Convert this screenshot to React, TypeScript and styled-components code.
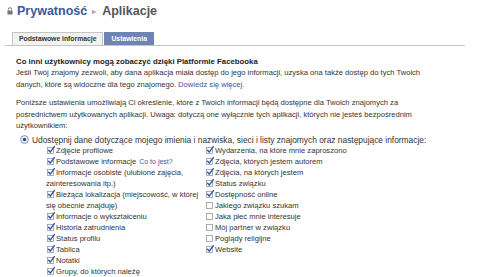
import React from 'react';
import styled, { createGlobalStyle } from 'styled-components';

const GlobalStyle = createGlobalStyle`
  html, body {
    margin: 0;
    padding: 0;
    background: #fff;
  }
  body {
    font-family: "Liberation Sans", Arial, sans-serif;
    color: #333;
  }
`;

const Page = styled.div`
  width: 496px;
  height: 277px;
  overflow: hidden;
`;

const Header = styled.div`
  display: flex;
  align-items: center;
  height: 18px;
  padding: 2px 0 0 7px;
  font-size: 12.5px;
  font-weight: bold;
`;

const Crumb = styled.span<{ $current?: boolean }>`
  color: ${(p) => (p.$current ? '#555' : '#3b5998')};
`;

const Arrow = styled.span`
  color: #aaa;
  font-size: 8px;
  margin: 0 6px 0 5px;
`;

const Tabs = styled.div`
  display: flex;
  margin: 12px 0 0 5px;
  padding-left: 7px;
  width: 453px;
  border-bottom: 1px solid #c4c4c4;
`;

const Tab = styled.div<{ $active?: boolean }>`
  height: 12px;
  line-height: 12px;
  padding: 0 6px;
  margin-right: 1px;
  font-size: 6.8px;
  font-weight: bold;
  color: ${(p) => (p.$active ? '#fff' : '#333')};
  background: ${(p) => (p.$active ? '#6d84b4' : '#f2f2f2')};
  border: 1px solid ${(p) => (p.$active ? '#6d84b4' : '#c4c4c4')};
  border-bottom: none;
`;

const Content = styled.div`
  padding: 10px 0 0 16px;
  font-size: 7.6px;
  line-height: 11.5px;
`;

const Title = styled.div`
  font-size: 7.8px;
  line-height: 11px;
  font-weight: bold;
  color: #222;
`;

const Para = styled.p`
  margin: 0 0 7px;
  white-space: nowrap;
`;

const Link = styled.a`
  color: #3b5998;
  text-decoration: none;
`;

const SmallLink = styled(Link)`
  font-size: 7px;
  margin-left: 3px;
`;

const RadioRow = styled.div`
  display: flex;
  align-items: center;
  margin-top: -4px;
  padding-left: 4px;
  font-size: 8.4px;
  line-height: 10px;
  white-space: nowrap;
`;

const RadioIcon = styled.span`
  display: inline-flex;
  margin-right: 3px;
`;

const Columns = styled.div`
  display: grid;
  grid-template-columns: 159px 200px;
  padding-left: 30px;
`;

const Column = styled.div`
  display: flex;
  flex-direction: column;
`;

const Item = styled.div`
  line-height: 11px;
`;

const Box = styled.span`
  display: inline-block;
  width: 8px;
  height: 8px;
  margin: 0 1px 0 1px;
  vertical-align: -1px;
`;

const Check = ({ on }: { on: boolean }) => (
  <Box>
    <svg width="8" height="8" viewBox="0 0 8 8">
      <rect x="0.5" y="1.5" width="6" height="6" fill="#fff" stroke={on ? '#8a9bbd' : '#999'} strokeWidth="0.8" />
      {on && <path d="M1.6 4.3 L3.2 6.1 L7.4 0.6" fill="none" stroke="#3b5998" strokeWidth="1.5" strokeLinecap="round" strokeLinejoin="round" />}
    </svg>
  </Box>
);

const left: [string, boolean, boolean?][] = [
  ['Zdjęcie profilowe', true],
  ['Podstawowe informacje', true, true],
  ['Informacje osobiste (ulubione zajęcia, zainteresowania itp.)', true],
  ['Bieżąca lokalizacja (miejscowość, w której się obecnie znajduję)', true],
  ['Informacje o wykształceniu', true],
  ['Historia zatrudnienia', true],
  ['Status profilu', true],
  ['Tablica', true],
  ['Notatki', true],
  ['Grupy, do których należę', true],
];

const right: [string, boolean][] = [
  ['Wydarzenia, na które mnie zaproszono', true],
  ['Zdjęcia, których jestem autorem', true],
  ['Zdjęcia, na których jestem', true],
  ['Status związku', true],
  ['Dostępność online', true],
  ['Jakiego związku szukam', false],
  ['Jaka płeć mnie interesuje', false],
  ['Mój partner w związku', false],
  ['Poglądy religijne', false],
  ['Website', true],
];

const Lock = () => (
  <svg width="6" height="8" viewBox="0 0 7 9" style={{ marginRight: 4 }}>
    <path d="M1.5 4 V2.6 A2 2 0 0 1 5.5 2.6 V4" fill="none" stroke="#777" strokeWidth="1.1" />
    <rect x="0.5" y="4" width="6" height="4.5" rx="0.5" fill="#777" />
  </svg>
);

export default function App() {
  return (
    <Page>
      <GlobalStyle />
      <Header>
        <Lock />
        <Crumb>Prywatność</Crumb>
        <Arrow>▸</Arrow>
        <Crumb $current>Aplikacje</Crumb>
      </Header>
      <Tabs>
        <Tab>Podstawowe informacje</Tab>
        <Tab $active>Ustawienia</Tab>
      </Tabs>
      <Content>
        <Title>Co inni użytkownicy mogą zobaczyć dzięki Platformie Facebooka</Title>
        <Para>
          Jeśli Twój znajomy zezwoli, aby dana aplikacja miała dostęp do jego informacji, uzyska ona także dostęp do tych Twoich
          <br />
          danych, które są widoczne dla tego znajomego. <Link href="#">Dowiedz się więcej.</Link>
        </Para>
        <Para>
          Poniższe ustawienia umożliwiają Ci określenie, które z Twoich informacji będą dostępne dla Twoich znajomych za
          <br />
          pośrednictwem użytkowanych aplikacji. Uwaga: dotyczą one wyłącznie tych aplikacji, których nie jesteś bezpośrednim
          <br />
          użytkownikiem:
        </Para>
        <RadioRow>
          <RadioIcon>
            <svg width="9" height="9" viewBox="0 0 9 9">
              <circle cx="4.5" cy="4.5" r="3.9" fill="#e8eef8" stroke="#7d8fb5" strokeWidth="0.9" />
              <circle cx="4.5" cy="4.5" r="1.7" fill="#2d4a86" />
            </svg>
          </RadioIcon>
          Udostępnij dane dotyczące mojego imienia i nazwiska, sieci i listy znajomych oraz następujące informacje:
        </RadioRow>
        <Columns>
          <Column>
            {left.map(([label, on, info]) => (
              <Item key={label}>
                <Check on={on} />
                {label}
                {info && <SmallLink href="#">Co to jest?</SmallLink>}
              </Item>
            ))}
          </Column>
          <Column>
            {right.map(([label, on]) => (
              <Item key={label}>
                <Check on={on} />
                {label}
              </Item>
            ))}
          </Column>
        </Columns>
      </Content>
    </Page>
  );
}
